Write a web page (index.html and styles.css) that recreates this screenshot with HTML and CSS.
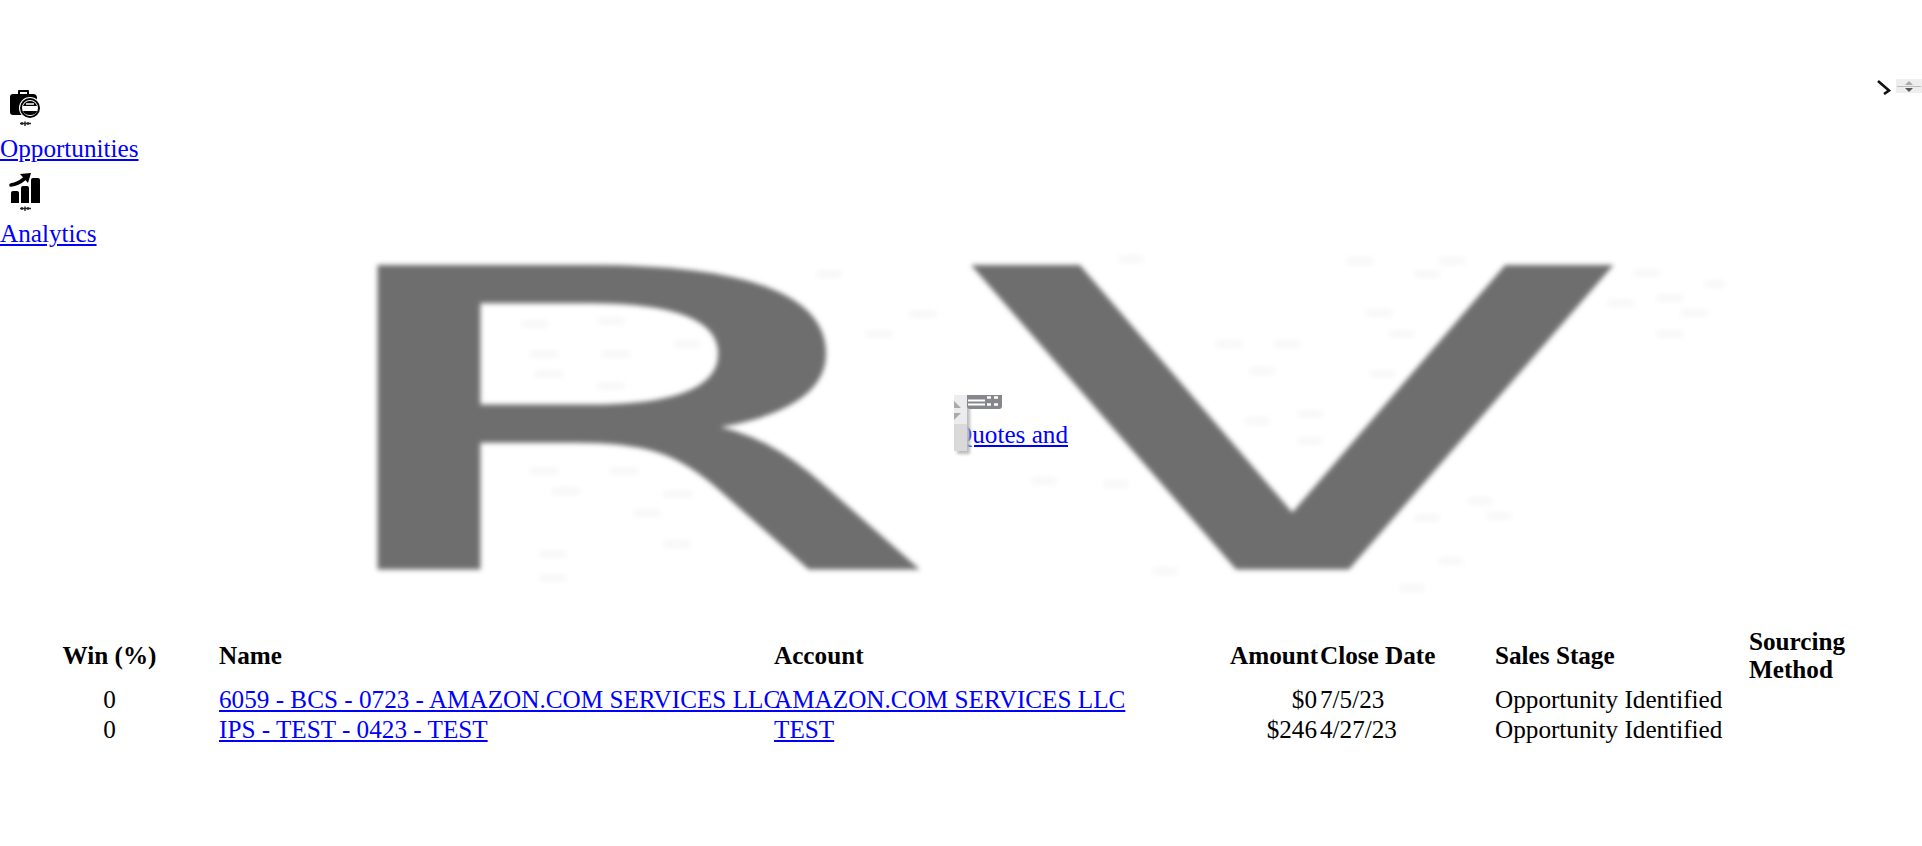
FILE: index.html
```html
<!DOCTYPE html>
<html lang="en">
<head>
    <meta charset="UTF-8">
    <meta name="viewport" content="width=device-width, initial-scale=1.0">
    <title>Opportunities</title>
    <link rel="stylesheet" href="styles.css">
</head>
<body>
    <div class="topbar">
        <svg class="chevron" viewBox="0 0 14 15"><path d="M1 1 L12 10.5 L7 14" fill="none" stroke="#111" stroke-width="2.6"/></svg>
        <div class="spinner">
            <span class="spin-up"></span>
            <span class="spin-line"></span>
            <span class="spin-down"></span>
        </div>
    </div>

    <nav class="side-nav">
        <div class="nav-item">
            <svg class="nav-icon" viewBox="0 0 42 46">
                <path d="M13 7 H18 V4 Q18 3 19 3 H28 Q29 3 29 4 V7 H33 Q37 7 37 11 V26 Q37 28 35 28 H13 Q10 28 10 25 V10 Q10 7 13 7 Z M20 5 V7 H27 V5 Z" fill="#000" fill-rule="evenodd"/>
                <circle cx="30" cy="21" r="11" fill="#fff"/>
                <circle cx="30" cy="21" r="9" fill="none" stroke="#000" stroke-width="2"/>
                <path d="M23 19 Q25 14 30 14 Q35 14 37 19 Z M23 24 H37 Q36 28 30 28 Q24 28 23 24 Z" fill="#000"/>
                <path d="M26 17 H34" stroke="#fff" stroke-width="1.5"/>
                <path class="specks" d="M20 36.5 H31 M22 35 V38 M25 34.5 V39 M28 35 V38" stroke="#222" stroke-width="1.4" fill="none"/>
            </svg>
            <a href="#">Opportunities</a>
        </div>
        <div class="nav-item">
            <svg class="nav-icon" viewBox="0 0 42 46">
                <path d="M11 13 Q18 12 24 7" fill="none" stroke="#000" stroke-width="3.6" stroke-linecap="round"/>
                <path d="M20 2 L31 1 L28 11 Z" fill="#000"/>
                <path d="M13 19 H17 Q19 19 19 21 V31 H11 V21 Q11 19 13 19 Z M23 14 H27 Q29 14 29 16 V31 H21 V16 Q21 14 23 14 Z M33 6 H38 Q40 6 40 8 V31 H31 V8 Q31 6 33 6 Z" fill="#000"/>
                <path class="specks" d="M20 36.5 H31 M22 35 V38 M25 34.5 V39 M28 35 V38" stroke="#222" stroke-width="1.4" fill="none"/>
            </svg>
            <a href="#">Analytics</a>
        </div>
    </nav>

    <div class="logo-area">
        <svg class="logo" viewBox="0 0 1400 350">
            <defs>
                <filter id="soft"><feGaussianBlur stdDeviation="2.8"/></filter>
                <filter id="softer"><feGaussianBlur stdDeviation="3"/></filter>
            </defs>
            <path class="logo-noise" filter="url(#softer)" d="M192 76 h26 M268 73 h26 M200 106 h28 M272 106 h28 M205 126 h28 M268 138 h26 M344 96 h26 M200 223 h28 M280 223 h28 M222 243 h28 M334 246 h28 M304 265 h26 M210 306 h26 M210 330 h26 M334 296 h26 M536 86 h26 M580 66 h26 M487 26 h24 M1017 13 h26 M1109 13 h26 M1085 26 h24 M1303 25 h26 M1375 36 h20 M1278 55 h26 M1327 50 h26 M1351 65 h26 M1327 86 h26 M1036 65 h26 M1060 86 h24 M886 96 h26 M944 96 h26 M920 123 h24 M1041 126 h24 M968 166 h24 M915 173 h24 M968 193 h24 M774 236 h24 M702 233 h24 M1138 253 h24 M1085 270 h24 M1157 268 h24 M1109 313 h24 M823 323 h24 M1070 340 h24 M789 11 h24"/>
            <g filter="url(#soft)">
                <text class="logo-letter" transform="translate(-38 319) scale(2.26 1)">R</text>
                <text class="logo-letter" transform="translate(642 319) scale(2.28 1)">V</text>
            </g>
        </svg>
        <div class="quotes-item">
            <a href="#">Quotes and</a>
            <div class="scroll-stub">
                <span class="tri"></span>
                <span class="tri tri-low"></span>
            </div>
            <svg class="quotes-icon" viewBox="0 0 35 15">
                <path d="M0 0 H35 V11 Q35 14 32 14 H3 Q0 14 0 11 Z" fill="#85878a"/>
                <path d="M1 5.5 H18 M1 9.5 H18" stroke="#fff" stroke-width="2"/>
                <path d="M20 2.5 H24 M27 2.5 H31 M20 9.5 H24 M27 9.5 H31" stroke="#fff" stroke-width="2.6"/>
            </svg>
        </div>
    </div>

    <table class="opps">
        <colgroup>
            <col class="c-win"><col class="c-name"><col class="c-account"><col class="c-amount"><col class="c-date"><col class="c-stage"><col class="c-source">
        </colgroup>
        <thead>
            <tr>
                <th class="center">Win (%)</th>
                <th>Name</th>
                <th>Account</th>
                <th class="right">Amount</th>
                <th>Close Date</th>
                <th>Sales Stage</th>
                <th>Sourcing<br>Method</th>
            </tr>
        </thead>
        <tbody>
            <tr>
                <td class="center">0</td>
                <td><a href="#">6059 - BCS - 0723 - AMAZON.COM SERVICES LLC</a></td>
                <td><a href="#">AMAZON.COM SERVICES LLC</a></td>
                <td class="right">$0</td>
                <td>7/5/23</td>
                <td>Opportunity Identified</td>
                <td></td>
            </tr>
            <tr>
                <td class="center">0</td>
                <td><a href="#">IPS - TEST - 0423 - TEST</a></td>
                <td><a href="#">TEST</a></td>
                <td class="right">$246</td>
                <td>4/27/23</td>
                <td>Opportunity Identified</td>
                <td></td>
            </tr>
        </tbody>
    </table>
</body>
</html>
```

FILE: styles.css
```css
body {
    margin: 0;
    background: #fff;
    color: #000;
    font-family: "Liberation Serif", "Times New Roman", serif;
    font-size: 25.2px;
    overflow: hidden;
}
a {
    color: #00f;
}
.topbar {
    box-sizing: border-box;
    height: 88px;
    padding-top: 79px;
    display: flex;
    justify-content: flex-end;
    align-items: flex-start;
    gap: 5px;
}
.chevron {
    width: 14px;
    height: 15px;
    flex: none;
    margin-top: 1px;
}
.spinner {
    width: 26px;
    height: 14px;
    flex: none;
    background: #eee;
    display: flex;
    flex-direction: column;
    align-items: center;
    justify-content: center;
}
.spin-up {
    border: 4px solid transparent;
    border-top: 0;
    border-bottom: 4px solid #aaa;
}
.spin-down {
    border: 4px solid transparent;
    border-bottom: 0;
    border-top: 4px solid #555;
}
.spin-line {
    width: 24px;
    height: 1px;
    margin: 1px 0;
    background: #bbb;
}
.nav-item {
    display: flex;
    flex-direction: column;
    align-items: flex-start;
}
.nav-item a {
    line-height: 29px;
}
.nav-icon {
    width: 42px;
    height: 46px;
    margin-top: -1px;
    margin-bottom: 1px;
}
.nav-item + .nav-item {
    margin-top: 10px;
}
.logo-area {
    position: relative;
    height: 350px;
}
.logo {
    position: absolute;
    left: 330px;
    top: 0;
    width: 1400px;
    height: 350px;
    overflow: visible;
}
.logo-letter {
    font-family: "DejaVu Sans", sans-serif;
    font-size: 411px;
    fill: #6e6e6e;
    stroke: #6e6e6e;
    stroke-width: 5;
}
.logo-noise {
    stroke: #f3f3f3;
    stroke-width: 5;
    fill: none;
}
.quotes-item {
    position: absolute;
    left: 954px;
    top: 147px;
    width: 120px;
}
.scroll-stub {
    position: absolute;
    left: 0;
    top: 0;
    width: 13px;
    height: 56px;
    background: linear-gradient(#ececec 29px, #d9d9d9 29px);
    box-shadow: 3px 3px 3px #bbb;
}
.tri {
    position: absolute;
    left: 0;
    top: 6px;
    width: 7px;
    height: 7px;
    background: #aaa;
    clip-path: polygon(0 0, 100% 100%, 0 100%);
}
.tri-low {
    top: 18px;
    clip-path: polygon(0 0, 100% 0, 0 100%);
}
.quotes-icon {
    position: absolute;
    left: 13px;
    top: 0;
    width: 35px;
    height: 15px;
}
.quotes-item a {
    position: absolute;
    left: 0;
    top: 25px;
    white-space: nowrap;
    line-height: 29px;
}
.opps {
    table-layout: fixed;
    border-collapse: collapse;
    width: 1922px;
    margin-top: 29px;
}
.c-win { width: 219px; }
.c-name { width: 555px; }
.c-account { width: 456px; }
.c-amount { width: 90px; }
.c-date { width: 175px; }
.c-stage { width: 254px; }
.c-source { width: 173px; }
.opps th {
    text-align: left;
    padding: 1px 0;
    font-weight: bold;
}
.opps td {
    padding: 1px 0;
    white-space: nowrap;
}
.opps .center {
    text-align: center;
}
.opps .right {
    text-align: right;
    padding-right: 3px;
}
```
